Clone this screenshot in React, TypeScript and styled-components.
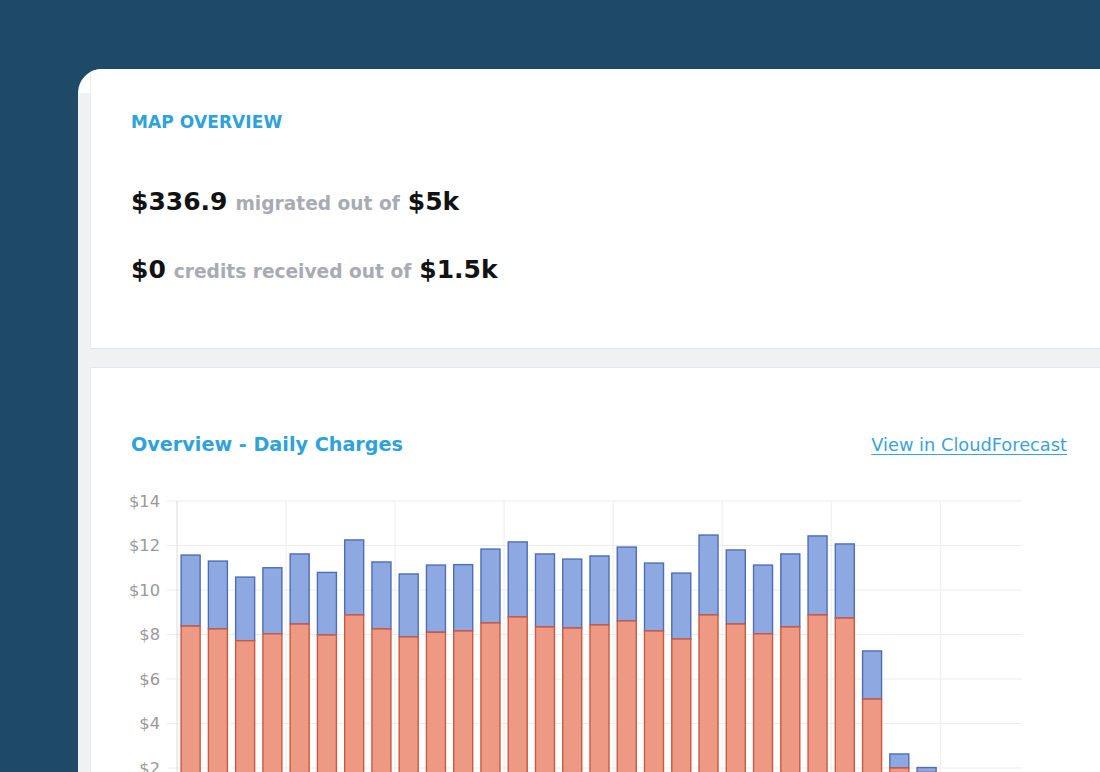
import styled, { createGlobalStyle } from "styled-components";

const GlobalStyle = createGlobalStyle`
  html, body {
    margin: 0;
    padding: 0;
    background: #1e4a68;
    overflow: hidden;
    font-family: "DejaVu Sans", "Liberation Sans", sans-serif;
  }
`;

const Page = styled.div`
  box-sizing: border-box;
  height: 100vh;
  padding: 69px 0 0 78px;
`;

const Panel = styled.div`
  height: 100%;
  display: flex;
  flex-direction: column;
  gap: 18px;
  padding-left: 12px;
  border-top-left-radius: 24px;
  overflow: hidden;
  background: linear-gradient(#ffffff 0 24px, #f0f1f3 24px);
`;

const Card = styled.section`
  box-sizing: border-box;
  background: #ffffff;
  border-top: 1px solid #e7e9ec;
  border-bottom: 1px solid #e2e4e8;
  border-left: 1px solid #eceef1;
`;

const SummaryCard = styled(Card)`
  height: 280px;
  flex-shrink: 0;
  padding: 43px 0 0 40px;
  border-top: none;
`;

const Eyebrow = styled.div`
  color: #2ea2da;
  font-size: 17px;
  font-weight: 700;
  line-height: 20px;
  letter-spacing: 0.1px;
  text-transform: uppercase;
`;

const StatLine = styled.div<{ $gap: number }>`
  margin-top: ${({ $gap }) => $gap}px;
  display: flex;
  align-items: baseline;
  gap: 8px;
  line-height: 30px;
  white-space: nowrap;
`;

const Amount = styled.span`
  color: #111214;
  font-size: 25px;
  font-weight: 700;
`;

const Note = styled.span`
  color: #a8abb3;
  font-size: 18.6px;
  font-weight: 700;
`;

const ChartCard = styled(Card)`
  flex: 1;
  padding: 64px 33px 0 40px;
`;

const ChartHeader = styled.div`
  display: flex;
  align-items: center;
  justify-content: space-between;
  height: 24px;
`;

const ChartTitle = styled.h2`
  margin: 0;
  color: #2ea2da;
  font-size: 19.2px;
  font-weight: 700;
`;

const ViewLink = styled.a`
  color: #3aa3db;
  font-size: 17.8px;
  text-decoration: underline;
  text-underline-offset: 3px;
  cursor: pointer;
`;

const ChartBox = styled.div`
  margin: 29px 0 0 -31px;
`;

const charges: [number, number][] = [
  [11.57, 8.38], [11.3, 8.25], [10.58, 7.72], [11.0, 8.03], [11.62, 8.47],
  [10.79, 7.98], [12.25, 8.88], [11.26, 8.25], [10.72, 7.89], [11.12, 8.1],
  [11.14, 8.16], [11.84, 8.52], [12.16, 8.79], [11.62, 8.34], [11.39, 8.29],
  [11.53, 8.43], [11.93, 8.61], [11.21, 8.16], [10.76, 7.8], [12.47, 8.88],
  [11.8, 8.47], [11.12, 8.03], [11.62, 8.34], [12.43, 8.88], [12.07, 8.74],
  [7.26, 5.1], [2.63, 2.0], [2.02, 1.8],
];

const PLOT_LEFT = 77;
const PLOT_RIGHT = 922;
const SLOT = (PLOT_RIGHT - PLOT_LEFT) / 31;
const BAR_W = 19;
const yOf = (v: number) => 16 + (14 - v) * 22.25;

const DailyChart = () => {
  const ticks = [14, 12, 10, 8, 6, 4, 2, 0];
  const verticals = Array.from({ length: 8 }, (_, k) => PLOT_LEFT + k * SLOT * 4);
  return (
    <svg width={940} height={340} viewBox="0 0 940 340">
      {ticks.map((t) => (
        <g key={t}>
          <line x1={67} x2={PLOT_RIGHT} y1={yOf(t)} y2={yOf(t)} stroke="#ececec" strokeWidth={1} />
          <text
            x={60}
            y={yOf(t) + 5.5}
            textAnchor="end"
            fontSize={16.3}
            fill="#999999"
            fontFamily="DejaVu Sans, sans-serif"
          >
            ${t}
          </text>
        </g>
      ))}
      {verticals.map((x, k) => (
        <line key={k} x1={x} x2={x} y1={yOf(14)} y2={340} stroke={k === 0 ? "#dcdcdc" : "#ececec"} strokeWidth={1} />
      ))}
      {charges.map(([total, base], i) => {
        const x = PLOT_LEFT + i * SLOT + (SLOT - BAR_W) / 2;
        return (
          <g key={i}>
            <rect
              x={x}
              y={yOf(total)}
              width={BAR_W}
              height={yOf(base) - yOf(total)}
              fill="#8ea9e1"
              stroke="#4d6db8"
              strokeWidth={1.4}
            />
            <rect
              x={x}
              y={yOf(base)}
              width={BAR_W}
              height={yOf(0) - yOf(base)}
              fill="#ed9983"
              stroke="#cd5841"
              strokeWidth={1.4}
            />
          </g>
        );
      })}
    </svg>
  );
};

const App = () => {
  return (
    <Page>
      <GlobalStyle />
      <Panel>
        <SummaryCard>
          <Eyebrow>Map Overview</Eyebrow>
          <StatLine $gap={55}>
            <Amount>$336.9</Amount>
            <Note>migrated out of</Note>
            <Amount>$5k</Amount>
          </StatLine>
          <StatLine $gap={36}>
            <Amount>$0</Amount>
            <Note>credits received out of</Note>
            <Amount>$1.5k</Amount>
          </StatLine>
        </SummaryCard>
        <ChartCard>
          <ChartHeader>
            <ChartTitle>Overview - Daily Charges</ChartTitle>
            <ViewLink>View in CloudForecast</ViewLink>
          </ChartHeader>
          <ChartBox>
            <DailyChart />
          </ChartBox>
        </ChartCard>
      </Panel>
    </Page>
  );
};

export default App;
